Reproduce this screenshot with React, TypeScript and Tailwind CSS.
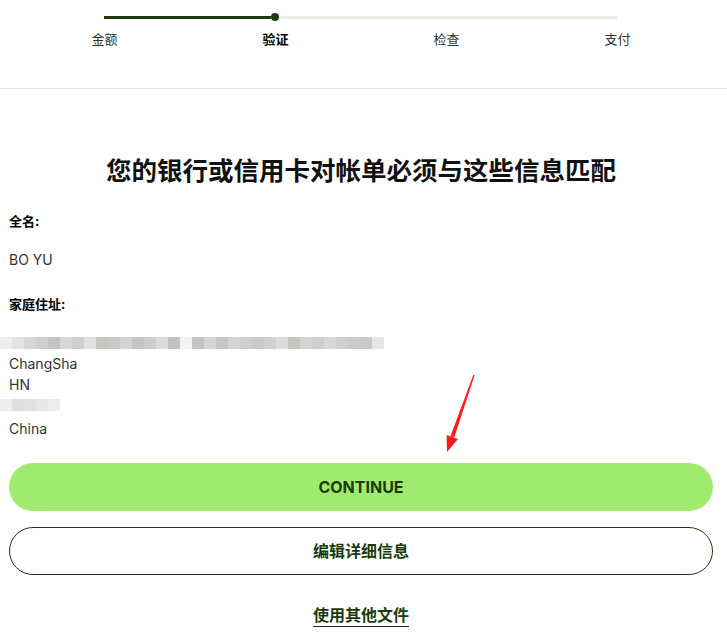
const cjk = "font-['Inter','Noto_Sans_CJK_SC',sans-serif]";

const steps = ['金额', '验证', '检查', '支付'];

const Mosaic = ({ cells }: { cells: string[] }) => (
  <div className="flex h-[12px]">
    {cells.map((c, i) => (
      <div key={i} className="h-full w-[12px]" style={{ backgroundColor: c }} />
    ))}
  </div>
);

const line1 = [
  '#eeeeee', '#e3e3e3', '#d6d6d6', '#cfcfcf', '#c4c4c4', '#d8d8d8', '#cdd0d2', '#e1e1e1', '#c9c5c0', '#c6cacd',
  '#d3d3d3', '#c7c5c2', '#cbcfcf', '#dcdcdc', '#bfc2c4', '#f3f3f3', '#c4c4c4', '#d5d5d3', '#c6c6c4', '#d3d4d6',
  '#cfcfcf', '#cacaca', '#d1d1d1', '#dcdcdc', '#c8c4c0', '#d1d5d8', '#d1cfcd', '#d6d9dc', '#d1d1d1', '#cbcbcb',
  '#c9c9c9', '#e6e6e6',
];
const line2 = ['#eeeeee', '#dcdedf', '#e1e1e1', '#e6e6e6', '#ededed'];

export default function App() {
  return (
    <div className={`${cjk} w-[727px] h-[635px] bg-white overflow-hidden`}>
      <div className="pt-[16px] pb-[40px] border-b border-[#e2e2e2]">
        <div className="ml-[104px] w-[513px] flex items-center h-[2px]">
          <div className="w-[167px] h-[3px] bg-[#1b3b0c]" />
          <div className="w-[8px] h-[8px] rounded-full bg-[#1b3b0c]" />
          <div className="flex-1 h-[3px] bg-[#ecece7]" />
        </div>
        <div className="ml-[19px] w-[684px] grid grid-cols-4 mt-[12px]">
          {steps.map((s, i) => (
            <div
              key={s}
              className={`text-center text-[13px] leading-[18px] ${i === 1 ? 'font-bold text-black' : 'text-[#333]'}`}
            >
              {s}
            </div>
          ))}
        </div>
      </div>

      <div className="pl-[9px] pr-[14px]">
        <h1 className="text-center text-[25.5px] font-bold leading-[34px] text-[#111] mt-[65px]">
          您的银行或信用卡对帐单必须与这些信息匹配
        </h1>

        <div className="mt-[24px] text-[13px] font-bold leading-[18px] text-black">全名:</div>
        <div className="mt-[20px] text-[14px] leading-[20px] text-[#333]">BO YU</div>

        <div className="mt-[25px] text-[13px] font-bold leading-[18px] text-black">家庭住址:</div>
        <div className="relative">
          <div className="-ml-[9px] mt-[24px]">
            <Mosaic cells={line1} />
          </div>
          <div className="mt-[4px] text-[14px] leading-[21px] text-[#333]">ChangSha</div>
          <div className="text-[14px] leading-[21px] text-[#333]">HN</div>
          <div className="-ml-[9px] mt-[4px]">
            <Mosaic cells={line2} />
          </div>
          <div className="mt-[7px] text-[14px] leading-[21px] text-[#333]">China</div>

          <svg className="absolute left-[423px] top-[31px]" width="50" height="90" viewBox="0 0 50 90">
            <polygon points="42.6,7.2 41.4,6.8 18.4,68.2 22.2,69.6" fill="#ff1a1a" />
            <polygon points="26,70.9 14.6,66.9 15,84" fill="#ff1a1a" />
          </svg>
        </div>

        <button className="mt-[24px] w-full h-[48px] rounded-full bg-[#a0ea70] text-[16px] font-bold text-[#1b3b0c]">
          CONTINUE
        </button>
        <button className="mt-[16px] w-full h-[48px] rounded-full border border-[#1b3b0c] bg-white text-[16px] font-bold text-[#1b3b0c]">
          编辑详细信息
        </button>
        <div className="mt-[28px] text-center">
          <span className="text-[16px] font-bold text-[#1b3b0c] underline underline-offset-[5px] decoration-[1px]">
            使用其他文件
          </span>
        </div>
      </div>
    </div>
  );
}
